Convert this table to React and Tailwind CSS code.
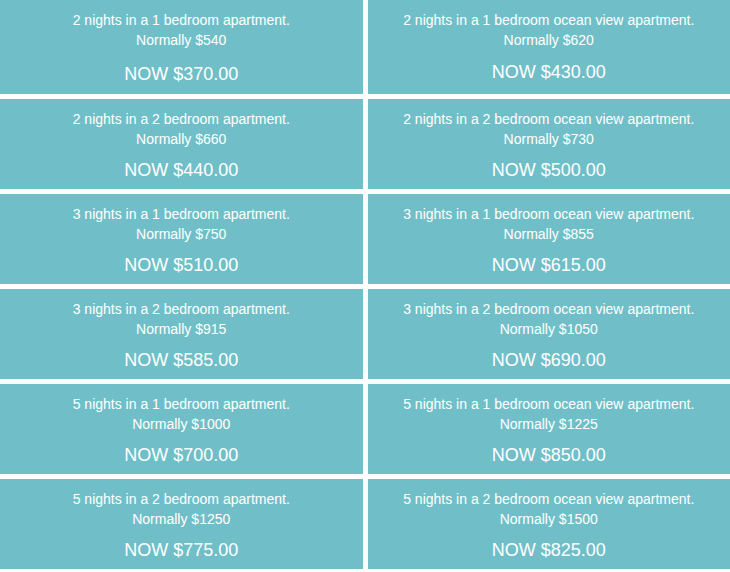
import React from 'react';

const deals = [
    { nights: 2, beds: 1, ocean: false, normal: 540, now: '370.00' },
    { nights: 2, beds: 1, ocean: true, normal: 620, now: '430.00' },
    { nights: 2, beds: 2, ocean: false, normal: 660, now: '440.00' },
    { nights: 2, beds: 2, ocean: true, normal: 730, now: '500.00' },
    { nights: 3, beds: 1, ocean: false, normal: 750, now: '510.00' },
    { nights: 3, beds: 1, ocean: true, normal: 855, now: '615.00' },
    { nights: 3, beds: 2, ocean: false, normal: 915, now: '585.00' },
    { nights: 3, beds: 2, ocean: true, normal: 1050, now: '690.00' },
    { nights: 5, beds: 1, ocean: false, normal: 1000, now: '700.00' },
    { nights: 5, beds: 1, ocean: true, normal: 1225, now: '850.00' },
    { nights: 5, beds: 2, ocean: false, normal: 1250, now: '775.00' },
    { nights: 5, beds: 2, ocean: true, normal: 1500, now: '825.00' },
];

const DealCard = ({ deal, first }) => (
    <div className={`bg-[#70bfc8] text-white text-center pt-[10px] ${first ? 'h-[94px]' : 'h-[90px]'}`}>
        <p className="text-[14px] leading-5">
            {deal.nights} nights in a {deal.beds} bedroom {deal.ocean ? 'ocean view ' : ''}apartment.
        </p>
        <p className="text-[14px] leading-5">Normally ${deal.normal}</p>
        <p className={`text-[18px] leading-[22px] ${first ? (deal.ocean ? 'mt-[11px]' : 'mt-[13px]') : 'mt-[10px]'}`}>
            NOW ${deal.now}
        </p>
    </div>
);

const App = () => {
    return (
        <div className="w-[730px] h-[572px] bg-white font-['Liberation_Sans',Arial,sans-serif]">
            <div className="grid grid-cols-2 gap-[5px]">
                {deals.map((deal, i) => (
                    <DealCard key={i} deal={deal} first={i < 2} />
                ))}
            </div>
        </div>
    );
};

export default App;
